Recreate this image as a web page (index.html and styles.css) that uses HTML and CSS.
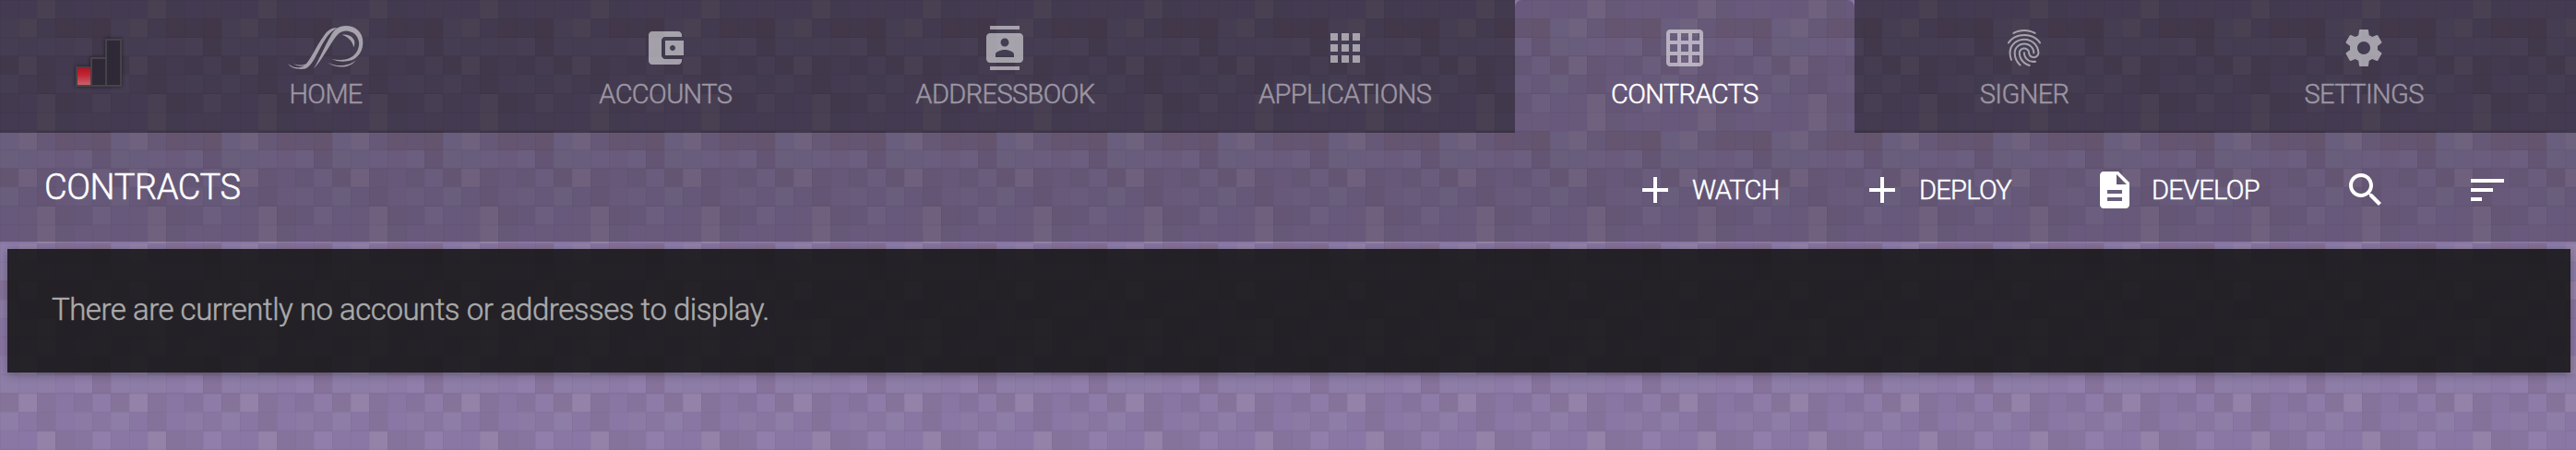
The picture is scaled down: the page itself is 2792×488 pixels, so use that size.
FILE: index.html
```html
<!DOCTYPE html>
<html lang="en">
<head>
<meta charset="utf-8">
<title>Contracts</title>
<link rel="stylesheet" href="styles.css">
</head>
<body>
<svg class="backdrop" aria-hidden="true">
  <defs>
    <pattern id="squares" width="120" height="121.9" patternUnits="userSpaceOnUse">
      <rect width="120" height="122" fill="#8b76a5"/>
      <g transform="scale(20 20.3167)" stroke="#000" stroke-opacity=".04" stroke-width=".05">
        <rect width="1" height="1" x="0" y="0" fill="#8b76a5"/><rect width="1" height="1" x="1" y="0" fill="#8b77a5"/><rect width="1" height="1" x="2" y="0" fill="#9886a9"/><rect width="1" height="1" x="3" y="0" fill="#8777a0"/><rect width="1" height="1" x="4" y="0" fill="#8b77a7"/><rect width="1" height="1" x="5" y="0" fill="#8c79a5"/>
        <rect width="1" height="1" x="0" y="1" fill="#8f7fab"/><rect width="1" height="1" x="1" y="1" fill="#9786a9"/><rect width="1" height="1" x="2" y="1" fill="#87779f"/><rect width="1" height="1" x="3" y="1" fill="#867093"/><rect width="1" height="1" x="4" y="1" fill="#857197"/><rect width="1" height="1" x="5" y="1" fill="#846f8f"/>
        <rect width="1" height="1" x="0" y="2" fill="#8e7fa8"/><rect width="1" height="1" x="1" y="2" fill="#8c7ea8"/><rect width="1" height="1" x="2" y="2" fill="#8f7ea8"/><rect width="1" height="1" x="3" y="2" fill="#8e7aa7"/><rect width="1" height="1" x="4" y="2" fill="#927fab"/><rect width="1" height="1" x="5" y="2" fill="#847099"/>
        <rect width="1" height="1" x="0" y="3" fill="#857297"/><rect width="1" height="1" x="1" y="3" fill="#9684a9"/><rect width="1" height="1" x="2" y="3" fill="#847298"/><rect width="1" height="1" x="3" y="3" fill="#8976a1"/><rect width="1" height="1" x="4" y="3" fill="#84729b"/><rect width="1" height="1" x="5" y="3" fill="#8f7ca7"/>
        <rect width="1" height="1" x="0" y="4" fill="#8f7fa8"/><rect width="1" height="1" x="1" y="4" fill="#8876a1"/><rect width="1" height="1" x="2" y="4" fill="#837197"/><rect width="1" height="1" x="3" y="4" fill="#8b77a5"/><rect width="1" height="1" x="4" y="4" fill="#8c7aa5"/><rect width="1" height="1" x="5" y="4" fill="#8775a0"/>
        <rect width="1" height="1" x="0" y="5" fill="#8977a4"/><rect width="1" height="1" x="1" y="5" fill="#8b77a5"/><rect width="1" height="1" x="2" y="5" fill="#9684a9"/><rect width="1" height="1" x="3" y="5" fill="#847299"/><rect width="1" height="1" x="4" y="5" fill="#86749d"/><rect width="1" height="1" x="5" y="5" fill="#927fab"/>
      </g>
      <rect width="120" height="122" fill="#8b79a5" fill-opacity=".2"/>
    </pattern>
  </defs>
  <rect width="100%" height="100%" fill="url(#squares)"/>
</svg>
<div class="app">
  <nav class="tabs">
    <div class="brand">
      <svg class="bars" viewBox="0 0 50 52">
        <defs><linearGradient id="red" x2="0" y2="1"><stop offset="0" stop-color="#b80f1d"/><stop offset=".4" stop-color="#bd2634"/><stop offset="1" stop-color="#cc6470"/></linearGradient></defs>
        <g stroke="#454348" stroke-width="2"><rect x="1" y="31" width="16" height="20" fill="url(#red)"/><rect x="17" y="21" width="16" height="30" fill="#2f2837"/><rect x="33" y="1" width="16" height="50" fill="#2f2837"/></g>
      </svg>
    </div>
    <a class="tab"><svg class="icon logo" viewBox="36 24 247 144"><path d="M37 148C54 163 78 163 88 155C110 138 128 90 152 58C166 38 180 29 197 31C174 42 160 62 143 94C127 123 112 158 93 164C78 166 48 167 37 148Z"/><path d="M55 147C70 154 85 153 96 147L92 153C78 158 62 154 55 147Z"/><path d="M120 164C136 139 155 92 176 56C188 35 203 24 224 24C260 24 282 47 281 80C280 115 256 138 224 140C207 141 189 137 179 132C202 138 227 137 247 124C264 112 270 92 268 76C264 52 247 41 226 40C208 40 197 52 187 67C165 100 145 139 120 164Z"/><path d="M213 53C234 49 254 62 254 79C254 85 253 90 251 94C247 73 234 61 213 53Z"/><path d="M166 144C193 157 231 159 258 136C238 165 196 163 166 144Z"/></svg><span>HOME</span></a>
    <a class="tab"><svg class="icon" viewBox="0 0 24 24"><path d="M21 18v1c0 1.100-.9 2-2 2H5c-1.110 0-2-.9-2-2V5c0-1.100.890-2 2-2h14c1.100 0 2 .9 2 2v1h-9c-1.110 0-2 .9-2 2v8c0 1.100.890 2 2 2h9zm-9-2h10V8H12v8zm4-2.500c-.83 0-1.500-.67-1.500-1.500s.67-1.500 1.500-1.500 1.500.67 1.500 1.500-.67 1.500-1.500 1.500z"/></svg><span>ACCOUNTS</span></a>
    <a class="tab"><svg class="icon" viewBox="0 0 24 24"><path d="M20 0H4v2h16V0zM4 24h16v-2H4v2zM20 4H4c-1.100 0-2 .9-2 2v12c0 1.100.9 2 2 2h16c1.100 0 2-.9 2-2V6c0-1.100-.9-2-2-2zm-8 2.750c1.240 0 2.250 1.010 2.250 2.250s-1.010 2.250-2.250 2.250S9.750 10.240 9.750 9 10.760 6.750 12 6.750zM17 17H7v-1.500c0-1.670 3.330-2.500 5-2.500s5 .83 5 2.500V17z"/></svg><span>ADDRESSBOOK</span></a>
    <a class="tab"><svg class="icon" viewBox="0 0 24 24"><path d="M4 8h4V4H4v4zm6 12h4v-4h-4v4zm-6 0h4v-4H4v4zm0-6h4v-4H4v4zm6 0h4v-4h-4v4zm6-10v4h4V4h-4zm-6 4h4V4h-4v4zm6 6h4v-4h-4v4zm0 6h4v-4h-4v4z"/></svg><span>APPLICATIONS</span></a>
    <a class="tab active"><svg class="icon" viewBox="0 0 24 24"><path d="M20 2H4c-1.100 0-2 .9-2 2v16c0 1.100.9 2 2 2h16c1.100 0 2-.9 2-2V4c0-1.100-.9-2-2-2zM8 20H4v-4h4v4zm0-6H4v-4h4v4zm0-6H4V4h4v4zm6 12h-4v-4h4v4zm0-6h-4v-4h4v4zm0-6h-4V4h4v4zm6 12h-4v-4h4v4zm0-6h-4v-4h4v4zm0-6h-4V4h4v4z"/></svg><span>CONTRACTS</span></a>
    <a class="tab"><svg class="icon" viewBox="0 0 24 24"><path d="M17.810 4.470c-.08 0-.16-.02-.23-.06C15.660 3.420 14 3 12.010 3c-1.980 0-3.860.470-5.570 1.410-.24.130-.54.040-.68-.2-.13-.24-.04-.55.200-.68C7.820 2.520 9.860 2 12.010 2c2.130 0 3.990.470 6.030 1.520.250.130.340.430.210.670-.09.180-.26.280-.44.280zM3.500 9.720c-.1 0-.2-.03-.29-.09-.23-.16-.28-.47-.12-.7.990-1.400 2.250-2.500 3.750-3.270C9.980 4.040 14 4.030 17.150 5.650c1.500.770 2.760 1.860 3.750 3.250.160.220.110.540-.12.700-.23.160-.54.110-.7-.12-.9-1.260-2.040-2.250-3.390-2.940-2.870-1.470-6.540-1.470-9.400.010-1.360.700-2.500 1.700-3.400 2.960-.08.140-.23.210-.39.210zm6.250 12.070c-.13 0-.26-.05-.35-.15-.87-.87-1.340-1.430-2.010-2.640-.69-1.230-1.050-2.730-1.050-4.340 0-2.970 2.540-5.390 5.660-5.390s5.660 2.420 5.660 5.390c0 .28-.22.500-.5.500s-.5-.22-.5-.5c0-2.420-2.090-4.390-4.660-4.390-2.570 0-4.660 1.970-4.660 4.390 0 1.440.320 2.770.930 3.850.640 1.150 1.080 1.640 1.850 2.420.190.200.190.510 0 .710-.11.100-.24.150-.37.150zm7.170-1.850c-1.190 0-2.240-.3-3.100-.89-1.490-1.010-2.380-2.650-2.380-4.390 0-.28.220-.5.500-.5s.5.220.5.500c0 1.410.720 2.740 1.940 3.560.710.480 1.540.710 2.540.710.240 0 .640-.03 1.040-.1.270-.05.530.130.580.410.050.270-.13.530-.41.580-.57.110-1.070.120-1.210.120zM14.910 22c-.04 0-.09-.01-.13-.02-1.590-.44-2.630-1.030-3.720-2.100-1.400-1.390-2.170-3.240-2.170-5.220 0-1.620 1.380-2.940 3.080-2.940 1.700 0 3.080 1.320 3.080 2.940 0 1.070.930 1.940 2.080 1.940s2.080-.87 2.080-1.940c0-3.770-3.250-6.830-7.250-6.830-2.840 0-5.440 1.580-6.610 4.030-.39.810-.59 1.760-.59 2.800 0 .780.070 2.010.670 3.610.100.260-.03.550-.29.640-.26.100-.55-.04-.64-.29-.49-1.310-.73-2.610-.73-3.960 0-1.200.230-2.290.680-3.240 1.330-2.790 4.280-4.600 7.510-4.600 4.550 0 8.250 3.510 8.250 7.830 0 1.620-1.380 2.940-3.080 2.940s-3.080-1.320-3.080-2.940c0-1.070-.93-1.940-2.080-1.940s-2.080.87-2.080 1.940c0 1.710.660 3.310 1.870 4.510.950.940 1.860 1.460 3.270 1.850.270.070.420.350.350.610-.05.230-.26.380-.47.380z"/></svg><span>SIGNER</span></a>
    <a class="tab"><svg class="icon" viewBox="0 0 24 24"><path d="M19.430 12.980c.040-.32.070-.64.070-.98s-.03-.66-.07-.98l2.110-1.650c.190-.15.240-.42.120-.64l-2-3.460c-.12-.22-.39-.3-.61-.22l-2.490 1c-.52-.4-1.080-.73-1.690-.98l-.38-2.650C14.460 2.180 14.250 2 14 2h-4c-.25 0-.46.180-.49.420l-.38 2.650c-.61.250-1.170.590-1.690.98l-2.490-1c-.23-.09-.49 0-.61.220l-2 3.460c-.13.220-.07.490.120.640l2.110 1.650c-.04.320-.07.650-.07.980s.03.660.070.980l-2.110 1.650c-.19.150-.24.420-.12.640l2 3.460c.120.220.390.300.610.220l2.490-1c.520.400 1.080.730 1.690.980l.38 2.650c.03.240.240.420.490.420h4c.25 0 .46-.18.490-.42l.38-2.650c.61-.25 1.170-.59 1.690-.98l2.490 1c.23.090.490 0 .610-.22l2-3.460c.120-.22.070-.49-.12-.64l-2.110-1.650zM12 15.500c-1.930 0-3.500-1.570-3.500-3.500s1.570-3.500 3.500-3.500 3.500 1.570 3.500 3.500-1.570 3.500-3.500 3.500z"/></svg><span>SETTINGS</span></a>
    <div class="rest"></div>
  </nav>
  <header class="actionbar">
    <h1 class="title">CONTRACTS</h1>
    <div class="actions">
      <a class="action watch"><svg class="icon" viewBox="0 0 24 24"><path d="M19 13h-6v6h-2v-6H5v-2h6V5h2v6h6v2z"/></svg><span>WATCH</span></a>
      <a class="action deploy"><svg class="icon" viewBox="0 0 24 24"><path d="M19 13h-6v6h-2v-6H5v-2h6V5h2v6h6v2z"/></svg><span>DEPLOY</span></a>
      <a class="action develop"><svg class="icon" viewBox="0 0 24 24"><path d="M14 2H6c-1.100 0-1.990.9-1.990 2L4 20c0 1.100.890 2 1.990 2H18c1.100 0 2-.9 2-2V8l-6-6zm2 16H8v-2h8v2zm0-4H8v-2h8v2zm-3-5V3.500L18.500 9H13z"/></svg><span>DEVELOP</span></a>
      <a class="action search"><svg class="icon" viewBox="0 0 24 24"><path d="M15.500 14h-.79l-.28-.27C15.410 12.590 16 11.110 16 9.500 16 5.910 13.090 3 9.500 3S3 5.910 3 9.500 5.910 16 9.500 16c1.610 0 3.090-.59 4.230-1.570l.27.280v.79l5 4.990L20.490 19l-4.990-5zm-6 0C7.010 14 5 11.990 5 9.500S7.010 5 9.500 5 14 7.010 14 9.500 11.990 14 9.500 14z"/></svg></a>
      <a class="action"><svg class="icon" viewBox="0 0 24 24"><path d="M3 18h6v-2H3v2zM3 6v2h18V6H3zm0 7h12v-2H3v2z"/></svg></a>
    </div>
  </header>
  <main class="panel"><p class="message">There are currently no accounts or addresses to display.</p></main>
</div>
</body>
</html>
```

FILE: styles.css
```css
* { box-sizing: border-box; }
body {
  margin: 0;
  height: 488px;
  overflow: hidden;
  background: #8b76a5;
  font-family: Roboto, sans-serif;
  font-weight: 300;
  color: #fff;
  -webkit-text-stroke: .5px currentColor;
}
.backdrop {
  position: absolute;
  inset: 0;
  width: 100%;
  height: 100%;
  shape-rendering: crispEdges;
}
.app { position: relative; }
.tabs { display: flex; height: 144px; }
.brand, .tab, .rest {
  background: linear-gradient(rgba(0, 0, 0, 0) 140px, rgba(0, 0, 0, .12)), rgba(0, 0, 0, .51);
}
.brand { width: 169px; padding: 42px 0 0 82px; }
.bars {
  display: block;
  width: 50px;
  height: 52px;
  filter: drop-shadow(0 0 2px rgba(0, 0, 0, .5));
}
.tab {
  width: 368.2px;
  padding-top: 28px;
  display: flex;
  flex-direction: column;
  align-items: center;
  font-size: 29px;
  line-height: 32px;
  color: #9c96a2;
}
.tab span { margin-top: 10px; letter-spacing: -.6px; }
.tab .icon { opacity: .52; }
.tab.active {
  background: rgba(0, 0, 0, .25);
  border-radius: 8px 8px 0 0;
  color: #fff;
}
.rest { flex: 1; }
.icon { display: block; width: 48px; height: 48px; fill: #fff; flex: none; }
.icon.logo { width: 82px; }
.actionbar {
  display: flex;
  justify-content: space-between;
  height: 118px;
  padding: 0 72px 0 48px;
  background: rgba(0, 0, 0, .25);
}
.title { margin: 36px 0 0; font-size: 38px; line-height: 46px; font-weight: 300; letter-spacing: -.4px; }
.actions { display: flex; padding-top: 38px; }
.action { display: flex; height: 48px; font-size: 29px; line-height: 48px; }
.action span { margin-left: 16px; letter-spacing: -.7px; }
.watch { width: 246px; }
.deploy { width: 252px; }
.develop { width: 272px; }
.search { width: 132px; }
.panel {
  margin: 8px 6px 0 8px;
  height: 134px;
  padding: 44px 48px;
  background: rgba(24, 23, 25, .9);
  box-shadow: 0 2px 10px rgba(0, 0, 0, .3);
}
.message { margin: 0; font-size: 33px; line-height: 44px; letter-spacing: -.48px; color: #aaa; }
```
